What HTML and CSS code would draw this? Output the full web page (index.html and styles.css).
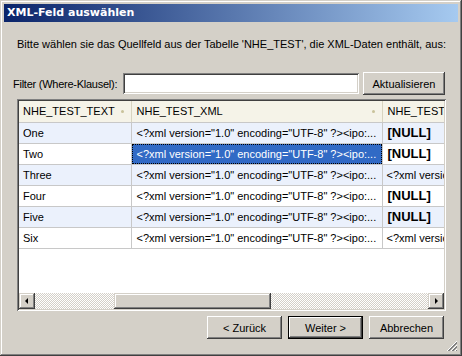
FILE: index.html
```html
<!DOCTYPE html>
<html lang="de">
<head>
  <meta charset="UTF-8">
  <title>XML-Feld auswählen</title>
  <link rel="stylesheet" href="styles.css">
</head>
<body>
  <div class="window">
    <div class="titlebar">XML-Feld auswählen</div>

    <p class="intro">Bitte wählen sie das Quellfeld aus der Tabelle 'NHE_TEST', die XML-Daten enthält, aus:</p>

    <div class="filter">
      <label class="filter-label">Filter (Where-Klausel):</label>
      <div class="field"></div>
      <button class="btn btn-refresh">Aktualisieren</button>
    </div>

    <div class="grid-box">
      <div class="grid-view">
        <table class="grid">
          <colgroup>
            <col class="c1"><col class="c2"><col class="c3">
          </colgroup>
          <thead>
            <tr>
              <th><div class="head">NHE_TEST_TEXT<span class="dot"></span></div></th>
              <th><div class="head">NHE_TEST_XML<span class="dot"></span></div></th>
              <th><div class="head">NHE_TEST_XML2</div></th>
            </tr>
          </thead>
          <tbody>
            <tr class="alt">
              <td>One</td>
              <td>&lt;?xml version="1.0" encoding="UTF-8" ?&gt;&lt;ipo:...</td>
              <td class="null">[NULL]</td>
            </tr>
            <tr>
              <td>Two</td>
              <td class="selected"><span>&lt;?xml version="1.0" encoding="UTF-8" ?&gt;&lt;ipo:...</span></td>
              <td class="null">[NULL]</td>
            </tr>
            <tr class="alt">
              <td>Three</td>
              <td>&lt;?xml version="1.0" encoding="UTF-8" ?&gt;&lt;ipo:...</td>
              <td>&lt;?xml version="1.0"</td>
            </tr>
            <tr>
              <td>Four</td>
              <td>&lt;?xml version="1.0" encoding="UTF-8" ?&gt;&lt;ipo:...</td>
              <td class="null">[NULL]</td>
            </tr>
            <tr class="alt">
              <td>Five</td>
              <td>&lt;?xml version="1.0" encoding="UTF-8" ?&gt;&lt;ipo:...</td>
              <td class="null">[NULL]</td>
            </tr>
            <tr>
              <td>Six</td>
              <td>&lt;?xml version="1.0" encoding="UTF-8" ?&gt;&lt;ipo:...</td>
              <td>&lt;?xml version="1.0"</td>
            </tr>
          </tbody>
        </table>
      </div>

      <div class="hscroll">
        <div class="arrow">
          <svg width="8" height="8" viewBox="0 0 8 8"><polygon points="2,4 5,1 5,7" fill="#000"/></svg>
        </div>
        <div class="track track-left"></div>
        <div class="thumb"></div>
        <div class="track"></div>
        <div class="arrow">
          <svg width="8" height="8" viewBox="0 0 8 8"><polygon points="3,1 6,4 3,7" fill="#000"/></svg>
        </div>
      </div>
    </div>

    <div class="buttons">
      <button class="btn">&lt; Zurück</button>
      <button class="btn btn-default">Weiter &gt;</button>
      <button class="btn">Abbrechen</button>
    </div>

    <svg class="grip" width="12" height="12" viewBox="0 0 12 12">
      <path d="M11 1 L1 11 M11 5 L5 11 M11 9 L9 11" stroke="#fff" stroke-width="1"/>
      <path d="M11 2 L2 11 M11 3 L3 11 M11 6 L6 11 M11 7 L7 11 M11 10 L10 11" stroke="#808080" stroke-width="1"/>
    </svg>
  </div>
</body>
</html>
```

FILE: styles.css
```css
* {
  margin: 0;
  padding: 0;
  box-sizing: border-box;
}

body {
  background: #d4d0c8;
  font-family: "Liberation Sans", Arial, sans-serif;
  font-size: 11px;
  color: #000;
}

.window {
  position: relative;
  width: 462px;
  height: 356px;
  padding: 4px;
  background: #d4d0c8;
  box-shadow: inset -1px -1px #404040, inset 1px 1px #d4d0c8,
              inset -2px -2px #808080, inset 2px 2px #fff;
}

.titlebar {
  height: 18px;
  line-height: 18px;
  padding-left: 3px;
  color: #fff;
  font-family: "DejaVu Sans", sans-serif;
  font-weight: bold;
  font-size: 11px;
  background: linear-gradient(to right, #0a246a, #a6caf0);
}

.intro {
  margin-top: 16px;
  padding-left: 13px;
  line-height: 13px;
}

.filter {
  display: flex;
  align-items: center;
  height: 23px;
  margin-top: 21px;
  padding-left: 9px;
}

.filter-label {
  flex: none;
  width: 110px;
  white-space: nowrap;
  letter-spacing: -0.25px;
}

.field {
  flex: none;
  width: 236px;
  height: 21px;
  background: #fff;
  box-shadow: inset 1px 1px #808080, inset -1px -1px #fff,
              inset 2px 2px #404040, inset -2px -2px #d4d0c8;
}

.btn {
  flex: none;
  width: 75px;
  height: 23px;
  border: none;
  background: #d4d0c8;
  font-family: "Liberation Sans", Arial, sans-serif;
  font-size: 11px;
  color: #000;
  box-shadow: inset -1px -1px #404040, inset 1px 1px #fff,
              inset -2px -2px #808080, inset 2px 2px #d4d0c8;
}

.btn-refresh {
  width: 82px;
  margin-left: 4px;
}

.btn-default {
  box-shadow: inset 0 0 0 1px #000, inset -2px -2px #404040, inset 2px 2px #fff,
              inset -3px -3px #808080;
}

.grid-box {
  display: flex;
  flex-direction: column;
  width: 429px;
  height: 212px;
  margin: 4px 0 0 13px;
  padding: 2px;
  background: #fff;
  box-shadow: inset 1px 1px #808080, inset -1px -1px #fff,
              inset 2px 2px #404040, inset -2px -2px #d4d0c8;
}

.grid-view {
  flex: 1;
  overflow: hidden;
}

.grid {
  table-layout: fixed;
  width: 480px;
  border-collapse: collapse;
}

.c1 { width: 112px; }
.c2 { width: 251px; }
.c3 { width: 117px; }

.grid th,
.grid td {
  height: 21px;
  padding: 0 0 0 4px;
  border-right: 1px solid #c8c8c8;
  border-bottom: 1px solid #c8c8c8;
  text-align: left;
  font-weight: normal;
  white-space: nowrap;
  overflow: hidden;
}

.grid td:nth-child(2) {
  padding-left: 5px;
}

.grid th {
  background: #f5f3e8;
  border-right-color: #d8d4c0;
}

.grid th:nth-child(2),
.grid th:nth-child(3) {
  padding-left: 5px;
}

.head {
  display: flex;
  align-items: center;
  justify-content: space-between;
  padding-right: 7px;
}

.dot {
  width: 3px;
  height: 3px;
  border-radius: 50%;
  background: #c9c29a;
}

.grid tr.alt td {
  background: #ebf1fc;
}

.grid td.selected {
  padding: 0;
  background: #316ac5;
  color: #fff;
}

.selected span {
  display: block;
  height: 20px;
  line-height: 18px;
  padding-left: 4px;
  border: 1px dotted #000;
}

.grid td.null {
  font-weight: bold;
  font-size: 13px;
  padding-left: 5px;
}

.hscroll {
  display: flex;
  height: 16px;
}

.arrow {
  display: flex;
  align-items: center;
  justify-content: center;
  width: 16px;
  height: 16px;
  background: #d4d0c8;
  box-shadow: inset -1px -1px #404040, inset 1px 1px #d4d0c8,
              inset -2px -2px #808080, inset 2px 2px #fff;
}

.track {
  flex: 1;
  background: repeating-conic-gradient(#d4d0c8 0% 25%, #fff 0% 50%) 0 0 / 2px 2px;
}

.track-left {
  flex: 0 0 79px;
}

.thumb {
  width: 157px;
  background: #d4d0c8;
  box-shadow: inset -1px -1px #404040, inset 1px 1px #d4d0c8,
              inset -2px -2px #808080, inset 2px 2px #fff;
}

.buttons {
  display: flex;
  justify-content: flex-end;
  gap: 6px;
  margin-top: 5px;
  padding-right: 14px;
}

.grip {
  position: absolute;
  right: 4px;
  bottom: 4px;
}
```
